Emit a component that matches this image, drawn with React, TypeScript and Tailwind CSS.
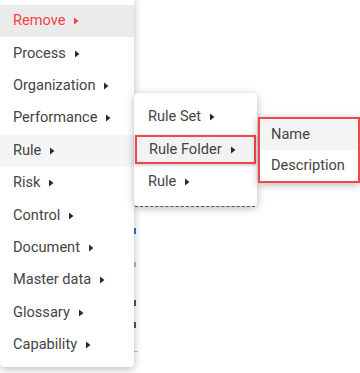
import React from "react";

const mainItems = [
  "Remove",
  "Process",
  "Organization",
  "Performance",
  "Rule",
  "Risk",
  "Control",
  "Document",
  "Master data",
  "Glossary",
  "Capability",
];

function Caret({ red }: { red?: boolean }) {
  return (
    <svg width="5" height="8" viewBox="0 0 5 8" className="ml-[9px] shrink-0">
      <path d="M0 0.5 L4.5 4 L0 7.5 Z" fill={red ? "#f44346" : "#2b2b2b"} />
    </svg>
  );
}

export default function App() {
  return (
    <div
      className="relative w-[360px] h-[373px] overflow-hidden bg-white text-[14.6px] text-[#444444]"
      style={{ fontFamily: "Roboto, 'Liberation Sans', sans-serif" }}
    >
      {/* page content peeking out behind the menus */}
      <div className="absolute left-[135px] top-[206px] w-[120px] border-t border-dashed border-[#5a6a8a]" />
      <div className="absolute left-[134px] top-[228px] w-[2px] h-[6px] bg-[#3b6fe0]" />
      <div className="absolute left-[134px] top-[262px] w-[2px] h-[5px] bg-[#bbb]" />
      <div className="absolute left-[134px] top-[300px] w-[2px] h-[6px] bg-[#555]" />
      <div className="absolute left-[134px] top-[322px] w-[2px] h-[6px] bg-[#555]" />
      <div className="absolute left-[134px] top-[351px] w-[4px] border-t border-[#bbb]" />

      {/* main menu */}
      <div className="absolute left-0 top-[-3px] w-[134px] bg-white pt-2 pb-[6px] rounded-b-[4px] shadow-[0_2px_8px_rgba(0,0,0,0.28)]">
        {mainItems.map((label, i) => (
          <div
            key={label}
            className={
              "flex items-center h-[32.4px] pl-[13px] " +
              (i === 0 ? "bg-[#ebebeb] text-[#f44346]" : i === 4 ? "bg-[#f5f5f5]" : "")
            }
          >
            <span>{label}</span>
            <Caret red={i === 0} />
          </div>
        ))}
      </div>

      {/* second-level menu */}
      <div className="absolute left-[134px] top-[93px] w-[123px] bg-white py-2 rounded-[4px] shadow-[0_2px_8px_rgba(0,0,0,0.28)]">
        <div className="flex items-center h-[32.4px] pl-[14px]">
          <span>Rule Set</span>
          <Caret />
        </div>
        <div className="h-[32.4px] px-[1px] py-[2px]">
          <div className="flex items-center h-full pl-[12px] bg-[#f2f2f2] border-2 border-[#f0474c] shadow-[0_1px_3px_rgba(0,0,0,0.25)]">
            <span>Rule Folder</span>
            <Caret />
          </div>
        </div>
        <div className="flex items-center h-[32.4px] pl-[14px]">
          <span>Rule</span>
          <Caret />
        </div>
      </div>

      {/* third-level menu */}
      <div className="absolute left-[258px] top-[117px] w-[102px] bg-white border-2 border-[#f0474c] shadow-[0_2px_8px_rgba(0,0,0,0.28)]">
        <div className="flex items-center h-[31px] pl-[11px] bg-[#f4f4f4]">Name</div>
        <div className="flex items-center h-[31px] pl-[11px]">Description</div>
      </div>
    </div>
  );
}
